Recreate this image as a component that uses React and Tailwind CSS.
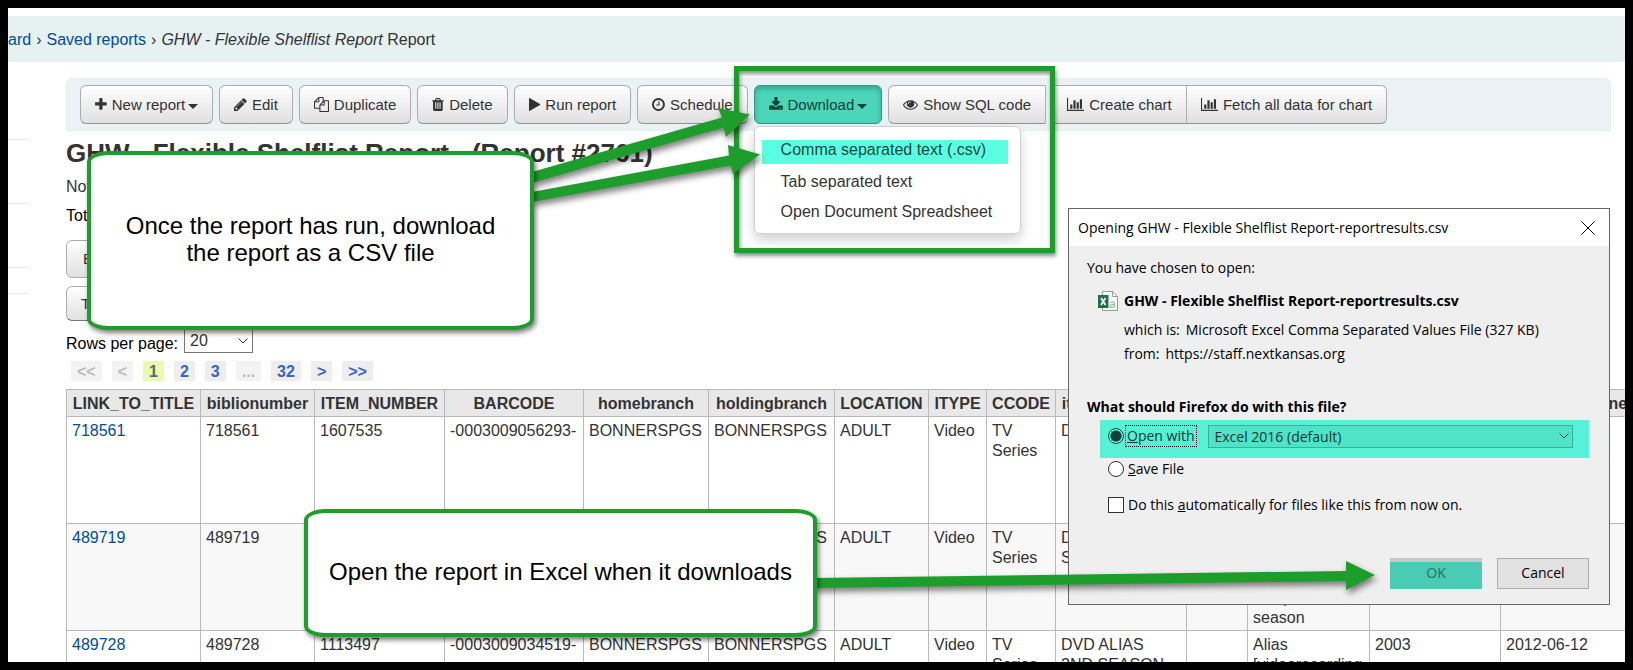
import React from "react";

const ICONS = {
  plus: ["192 0 1408 1792", "M1600 736v192q0 40-28 68t-68 28h-416v416q0 40-28 68t-68 28h-192q-40 0-68-28t-28-68v-416h-416q-40 0-68-28t-28-68v-192q0-40 28-68t68-28h416v-416q0-40 28-68t68-28h192q40 0 68 28t28 68v416h416q40 0 68 28t28 68z"],
  pencil: ["128 0 1536 1792", "M491 1536l91-91-235-235-91 91v107h128v128h107zm523-928q0-22-22-22-10 0-17 7l-542 542q-7 7-7 17 0 22 22 22 10 0 17-7l542-542q7-7 7-17zm-54-192l416 416-832 832h-416v-416zm683 96q0 53-37 90l-166 166-416-416 166-165q36-38 90-38 53 0 91 38l235 234q37 39 37 91z"],
  copy: ["0 0 1792 1792", "M1696 384q40 0 68 28t28 68v1216q0 40-28 68t-68 28h-960q-40 0-68-28t-28-68v-288h-544q-40 0-68-28t-28-68v-672q0-40 20-88t48-76l408-408q28-28 76-48t88-20h416q40 0 68 28t28 68v328q68-40 128-40h416zm-544 213l-299 299h299v-299zm-640-384l-299 299h299v-299zm196 647l316-316v-416h-384v416q0 40-28 68t-68 28h-416v640h512v-256q0-40 20-88t48-76zm956 804v-1152h-384v416q0 40-28 68t-68 28h-416v640h896z"],
  trash: ["192 0 1408 1792", "M704 1376v-704q0-14-9-23t-23-9h-64q-14 0-23 9t-9 23v704q0 14 9 23t23 9h64q14 0 23-9t9-23zm256 0v-704q0-14-9-23t-23-9h-64q-14 0-23 9t-9 23v704q0 14 9 23t23 9h64q14 0 23-9t9-23zm256 0v-704q0-14-9-23t-23-9h-64q-14 0-23 9t-9 23v704q0 14 9 23t23 9h64q14 0 23-9t9-23zm-544-992h448l-48-117q-7-9-17-11h-317q-10 2-17 11zm928 32v64q0 14-9 23t-23 9h-96v948q0 83-47 143.500t-113 60.500h-832q-66 0-113-58.500t-47-141.500v-952h-96q-14 0-23-9t-9-23v-64q0-14 9-23t23-9h309l70-167q15-37 54-63t79-26h320q40 0 79 26t54 63l70 167h309q14 0 23 9t9 23z"],
  play: ["192 0 1408 1792", "M1576 927l-1328 738q-23 13-39.5 3t-16.500-36v-1472q0-26 16.500-36t39.500 3l1328 738q23 13 23 31t-23 31z"],
  clock: ["128 0 1536 1792", "M1024 544v448q0 14-9 23t-23 9h-320q-14 0-23-9t-9-23v-64q0-14 9-23t23-9h224v-352q0-14 9-23t23-9h64q14 0 23 9t9 23zm416 352q0-148-73-273t-198-198-273-73-273 73-198 198-73 273 73 273 198 198 273 73 273-73 198-198 73-273zm224 0q0 209-103 385.500t-279.500 279.500-385.500 103-385.500-103-279.500-279.500-103-385.500 103-385.500 279.500-279.500 385.500-103 385.500 103 279.500 279.500 103 385.500z"],
  download: ["64 0 1664 1792", "M1344 1344q0-26-19-45t-45-19-45 19-19 45 19 45 45 19 45-19 19-45zm256 0q0-26-19-45t-45-19-45 19-19 45 19 45 45 19 45-19 19-45zm128-224v320q0 40-28 68t-68 28h-1472q-40 0-68-28t-28-68v-320q0-40 28-68t68-28h465l135 136q58 56 136 56t136-56l136-136h464q40 0 68 28t28 68zm-325-569q17 41-14 70l-448 448q-18 19-45 19t-45-19l-448-448q-31-29-14-70 17-39 59-39h256v-448q0-26 19-45t45-19h256q26 0 45 19t19 45v448h256q42 0 59 39z"],
  eye: ["0 0 1792 1792", "M1664 960q-152-236-381-353 61 104 61 225 0 185-131.500 316.500t-316.500 131.500-316.500-131.500-131.500-316.500q0-121 61-225-229 117-381 353 133 205 333.500 326.500t434.500 121.500 434.500-121.500 333.500-326.500zm-720-384q0-20-14-34t-34-14q-125 0-214.500 89.500t-89.500 214.500q0 20 14 34t34 14 34-14 14-34q0-86 61-147t147-61q20 0 34-14t14-34zm848 384q0 34-20 69-140 230-376.500 368.500t-499.500 138.500-499.500-139-376.500-368q-20-35-20-69t20-69q140-229 376.500-368t499.500-139 499.500 139 376.500 368q20 35 20 69z"],
  chart: ["0 0 2048 1792", "M640 896v512h-256v-512h256zm384-512v1024h-256v-1024h256zm1024 1152v128h-2048v-1536h128v1408h1920zm-640-896v768h-256v-768h256zm384-384v1152h-256v-1152h256z"],
};

function Icon({ name }) {
  const [box, d] = ICONS[name];
  return (
    <svg viewBox={box} className="h-[15px] w-auto shrink-0 fill-current" aria-hidden="true">
      <path d={d} />
    </svg>
  );
}

function Caret() {
  return (
    <svg viewBox="0 0 10 5" className="mt-1 h-[5px] w-[10px] fill-current" aria-hidden="true">
      <path d="M0 0h10L5 5z" />
    </svg>
  );
}

function Chevron({ className }) {
  return (
    <svg viewBox="0 0 10 6" className={className} fill="none" stroke="currentColor" aria-hidden="true">
      <path d="M.5.5 5 5 9.500.5" />
    </svg>
  );
}

function ToolButton({ icon, caret, shape = "rounded-md", tone = "border-[#adadad] border-b-[#929292] bg-linear-to-b from-white to-[#e0e0e0]", children }) {
  return (
    <button className={`flex h-[39px] items-center gap-[5px] border px-[14px] whitespace-nowrap ${shape} ${tone}`}>
      <Icon name={icon} />
      <span className="flex items-center gap-[3px]">
        {children}
        {caret && <Caret />}
      </span>
    </button>
  );
}

const PAGES = [
  ["<<", "bg-[#f3f3f3] text-[#bbb]"],
  ["<", "bg-[#f3f3f3] text-[#bbb]"],
  ["1", "bg-[#e8fcb0] text-[#666]"],
  ["2", "bg-[#eee] text-[#36c]"],
  ["3", "bg-[#eee] text-[#36c]"],
  ["...", "bg-[#f3f3f3] text-[#bbb]"],
  ["32", "bg-[#eee] text-[#36c]"],
  [">", "bg-[#eee] text-[#36c]"],
  [">>", "bg-[#eee] text-[#36c]"],
];

const COLUMNS = [
  ["LINK_TO_TITLE", 134],
  ["biblionumber", 114],
  ["ITEM_NUMBER", 130],
  ["BARCODE", 139],
  ["homebranch", 125],
  ["holdingbranch", 126],
  ["LOCATION", 94],
  ["ITYPE", 58],
  ["CCODE", 69],
  ["itemcallnumber", 131],
  ["vol", 61],
  ["title", 122],
  ["copyrightdate", 131],
  ["dateaccessioned", 144],
];

const ROWS = [
  ["718561", "718561", "1607535", "-0003009056293-", "BONNERSPGS", "BONNERSPGS", "ADULT", "Video", "TV Series", "DVD", "", "", "", ""],
  ["489719", "489719", "1113496", "-0003009034518-", "BONNERSPGS", "BONNERSPGS", "ADULT", "Video", "TV Series", "DVD ALIAS\nSEASON 1", "", "Alias\n[videorecording\n: the\ncomplete\nseason", "2003", "2012-06-12"],
  ["489728", "489728", "1113497", "-0003009034519-", "BONNERSPGS", "BONNERSPGS", "ADULT", "Video", "TV Series", "DVD ALIAS\n2ND SEASON", "", "Alias\n[videorecording", "2003", "2012-06-12"],
];

function ResultsTable() {
  return (
    <table className="mt-2 w-[1579px] table-fixed border-collapse leading-5">
      <colgroup>
        {COLUMNS.map(([name, width]) => (
          <col key={name} style={{ width }} />
        ))}
      </colgroup>
      <thead>
        <tr className="h-[27px] bg-[#e8e8e8]">
          {COLUMNS.map(([name]) => (
            <th key={name} className="border border-[#b9b9b9] p-0 pt-[2px] text-center font-bold">{name}</th>
          ))}
        </tr>
      </thead>
      <tbody>
        {ROWS.map((row) => (
          <tr key={row[0]} className="h-[107px] align-top even:bg-[#f8f8f8]">
            {row.map((cell, i) => (
              <td key={i} className="overflow-hidden border border-[#b9b9b9] px-[5px] pt-1 pb-[2px] whitespace-pre-line">
                {i === 0 ? <a href="#title" className="text-[#004d99]">{cell}</a> : cell}
              </td>
            ))}
          </tr>
        ))}
      </tbody>
    </table>
  );
}

function DownloadMenu() {
  return (
    <ul className="absolute top-[41px] left-0 flex w-[267px] flex-col gap-[6px] rounded-md border border-[#d0d0d0] bg-white px-[7px] pt-[13px] pb-[9px] text-[16px] leading-6 whitespace-nowrap shadow-[0_6px_12px_rgba(0,0,0,.18)]">
      <li className="mr-[5px] bg-[#5affe1]">
        <a href="#csv" className="block px-[19px] pb-1 leading-5 text-[#11483d]">Comma separated text (.csv)</a>
      </li>
      <li><a href="#tab" className="block px-[19px]">Tab separated text</a></li>
      <li><a href="#ods" className="block px-[19px]">Open Document Spreadsheet</a></li>
    </ul>
  );
}

function FileIcon() {
  return (
    <svg viewBox="0 0 20 20" className="h-5 w-5" aria-hidden="true">
      <path d="M4.500.5h10l5 5v14h-15z" fill="#fff" stroke="#9a9a9a" />
      <path d="M14.500.5v5h5" fill="none" stroke="#9a9a9a" />
      <path d="M0 4h10.500v13H0z" fill="#1f7246" />
      <path d="M3 7l4.500 7M7.500 7 3 14" stroke="#fff" strokeWidth="1.700" fill="none" />
      <path d="M12.500 11.500q3.500-1.800 3.700.8v4M16.200 13.500q-4-.2-4 1.600t2 1.400 2-1.700" stroke="#7cc39a" strokeWidth="1.200" fill="none" />
    </svg>
  );
}

const RADIO = "h-4 w-4 shrink-0 appearance-none rounded-full border border-[#333]";

function OpenDialog() {
  return (
    <section
      role="dialog"
      aria-label="Opening file"
      className="absolute top-[200px] left-[1060px] flex h-[397px] w-[542px] flex-col border border-[#666] bg-[#efefef] font-['Open_Sans','Noto_Sans',sans-serif] text-[14px] leading-5 text-black"
    >
      <header className="flex h-[37px] items-center justify-between bg-white pr-[14px] pl-[9px]">
        <h2>Opening GHW - Flexible Shelflist Report-reportresults.csv</h2>
        <button aria-label="Close">
          <svg viewBox="0 0 14 14" className="h-[14px] w-[14px]" stroke="#000" aria-hidden="true">
            <path d="M.5.5l13 13M13.500.5l-13 13" />
          </svg>
        </button>
      </header>
      <div className="flex flex-col pt-3 pr-5 pl-[18px]">
        <p>You have chosen to open:</p>
        <div className="mt-3 flex items-center gap-[6px] pl-[11px]">
          <FileIcon />
          <strong className="pt-px">GHW - Flexible Shelflist Report-reportresults.csv</strong>
        </div>
        <p className="mt-[9px] flex gap-[6px] pl-[37px]"><span>which is:</span><span>Microsoft Excel Comma Separated Values File (327 KB)</span></p>
        <p className="mt-1 flex gap-[6px] pl-[37px]"><span>from:</span><span>https://staff.nextkansas.org</span></p>
        <strong className="mt-[33px]">What should Firefox do with this file?</strong>
        <div className="mt-[3px] ml-[13px] flex h-[38px] items-start bg-[#56f1d6] pt-[5px] pr-4 pl-2">
          <label className="flex items-center gap-[1px] leading-5">
            <input type="radio" name="action" defaultChecked className={`${RADIO} border-[#155448] bg-[radial-gradient(circle,#133f37_5px,transparent_6px)]`} />
            <span className="border border-dotted border-black px-px text-[#10382f]"><u>O</u>pen with</span>
          </label>
          <div className="relative ml-[11px] flex-1 text-[#10382f]">
            <select aria-label="Application" className="h-[23px] w-full appearance-none border border-[#3aaf9b] bg-[#4fe4ca] pl-[6px]">
              <option>Excel 2016 (default)</option>
            </select>
            <Chevron className="absolute top-2 right-1 h-[6px] w-[10px]" />
          </div>
        </div>
        <label className="mt-[1px] ml-[21px] flex items-center gap-1">
          <input type="radio" name="action" className={`${RADIO} bg-white`} />
          <span><u>S</u>ave File</span>
        </label>
        <label className="mt-4 ml-[21px] flex items-center gap-1">
          <input type="checkbox" className="h-4 w-4 appearance-none border border-[#333] bg-white" />
          <span>Do this <u>a</u>utomatically for files like this from now on.</span>
        </label>
      </div>
      <footer className="mt-auto flex justify-end gap-[15px] pr-5 pb-[15px]">
        <button className="h-[31px] w-[92px] border-t-4 border-[#c8c8c8] bg-[#49ccb3] pb-[6px] text-[#23705f]">OK</button>
        <button className="h-[31px] w-[92px] border border-[#adadad] bg-[#e1e1e1] pb-[2px]">Cancel</button>
      </footer>
    </section>
  );
}

function Callout({ place, children }) {
  return (
    <div className={`absolute flex items-center justify-center rounded-[22px/11px] border-4 border-[#1d9e2c] bg-white pb-[3px] text-center text-[24px] leading-[27px] whitespace-nowrap text-black shadow-[2px_3px_5px_rgba(0,0,0,.5)] ${place}`}>
      <p>{children}</p>
    </div>
  );
}

function Arrows() {
  return (
    <svg
      viewBox="0 0 1617 654"
      className="pointer-events-none absolute top-0 left-0 h-[654px] w-[1617px] fill-[#1d9e2c] drop-shadow-[2px_4px_3px_rgba(0,0,0,.5)]"
      aria-hidden="true"
    >
      <path d="M524 164 714 109.500 710 100 742 106.500 718 129 715.500 119.500 524 175z" />
      <path d="M524 184 721 147.500 720 137 752 146.500 725 166 723 157.500 524 194z" />
      <path d="M805 570 1338 563V553L1367 567 1338 582V573L805 580z" />
    </svg>
  );
}

export default function App() {
  return (
    <div className="relative h-screen overflow-hidden border-8 border-black bg-white pt-2 font-['Liberation_Sans',Arial,sans-serif] text-[16px] leading-5 text-[#333]">
      <nav className="flex h-[46px] items-center gap-[5px] bg-[#e6f1f1] pt-[2px] whitespace-nowrap">
        <a href="#dashboard" className="text-[#004d99]">ard</a>
        <span>›</span>
        <a href="#saved" className="text-[#004d99]">Saved reports</a>
        <span>›</span>
        <span><i>GHW - Flexible Shelflist Report</i> Report</span>
      </nav>

      <div className="flex">
        <aside className="w-[21px] shrink-0 pt-[77px]">
          <div className="h-16 border-t border-[#e8e8e8]" />
          <div className="h-16 border-t border-[#e8e8e8]" />
          <div className="h-[27px] border-y border-[#e8e8e8]" />
        </aside>

        <main className="min-w-0 flex-1 pt-4 pl-[37px]">
          <div className="mr-[14px] flex gap-[6px] rounded-t-md border border-[#e3f0f0] bg-[#eaf2f5] px-[13px] py-[6px] text-[15px]">
            <ToolButton icon="plus" caret>New report</ToolButton>
            <ToolButton icon="pencil">Edit</ToolButton>
            <ToolButton icon="copy">Duplicate</ToolButton>
            <ToolButton icon="trash">Delete</ToolButton>
            <ToolButton icon="play">Run report</ToolButton>
            <ToolButton icon="clock">Schedule</ToolButton>
            <div className="relative">
              <ToolButton icon="download" caret tone="border-[#3a9583] bg-[#4bd5b9] text-[#114236] shadow-[inset_0_3px_5px_rgba(0,70,55,.3)]">Download</ToolButton>
              <DownloadMenu />
            </div>
            <ToolButton icon="eye" shape="rounded-l-md">Show SQL code</ToolButton>
            <div className="flex -space-x-px">
              <ToolButton icon="chart" shape="rounded-none">Create chart</ToolButton>
              <ToolButton icon="chart" shape="rounded-r-md">Fetch all data for chart</ToolButton>
            </div>
          </div>

          <h1 className="mt-[6px] text-[26px] leading-8 font-bold whitespace-nowrap">GHW - Flexible Shelflist Report - (Report #2761)</h1>
          <p className="mt-2">Notes:</p>
          <p className="mt-[9px] text-black">Total number of results: 632</p>
          <div className="mt-[14px] flex flex-col items-start gap-2 text-[15px]">
            <button className="h-[38px] rounded-md border border-[#adadad] bg-linear-to-b from-white to-[#e0e0e0] px-4">Batch operations</button>
            <button className="h-[35px] rounded-md border border-[#adadad] border-b-[#777] bg-linear-to-b from-white to-[#e0e0e0] px-[14px]">Toggle</button>
          </div>
          <div className="mt-[7px] flex h-[25px] items-center gap-[6px] text-black">
            <label htmlFor="rows" className="pt-[6px]">Rows per page:</label>
            <div className="relative text-[#333]">
              <select id="rows" className="block h-[25px] w-[69px] appearance-none border border-[#777] bg-white pl-[5px]">
                <option>20</option>
              </select>
              <Chevron className="absolute top-[10px] right-[5px] h-[6px] w-[10px]" />
            </div>
          </div>
          <div className="mt-2 flex gap-[10px] pl-[5px] font-bold">
            {PAGES.map(([label, tone]) => (
              <a key={label} href="#page" className={`h-5 px-[6px] leading-[22px] ${tone}`}>{label}</a>
            ))}
          </div>
          <ResultsTable />
        </main>
      </div>

      <OpenDialog />
      <div className="pointer-events-none absolute top-[58px] left-[726px] h-[187px] w-[321px] border-5 border-[#1d9e2c] shadow-[1px_3px_4px_rgba(0,0,0,.45),inset_1px_3px_4px_rgba(0,0,0,.45)]" />
      <Arrows />
      <Callout place="top-[143px] left-[79px] h-[179px] w-[447px]">
        Once the report has run, download<br />the report as a CSV file
      </Callout>
      <Callout place="top-[501px] left-[296px] h-[128px] w-[513px]">Open the report in Excel when it downloads</Callout>
    </div>
  );
}
